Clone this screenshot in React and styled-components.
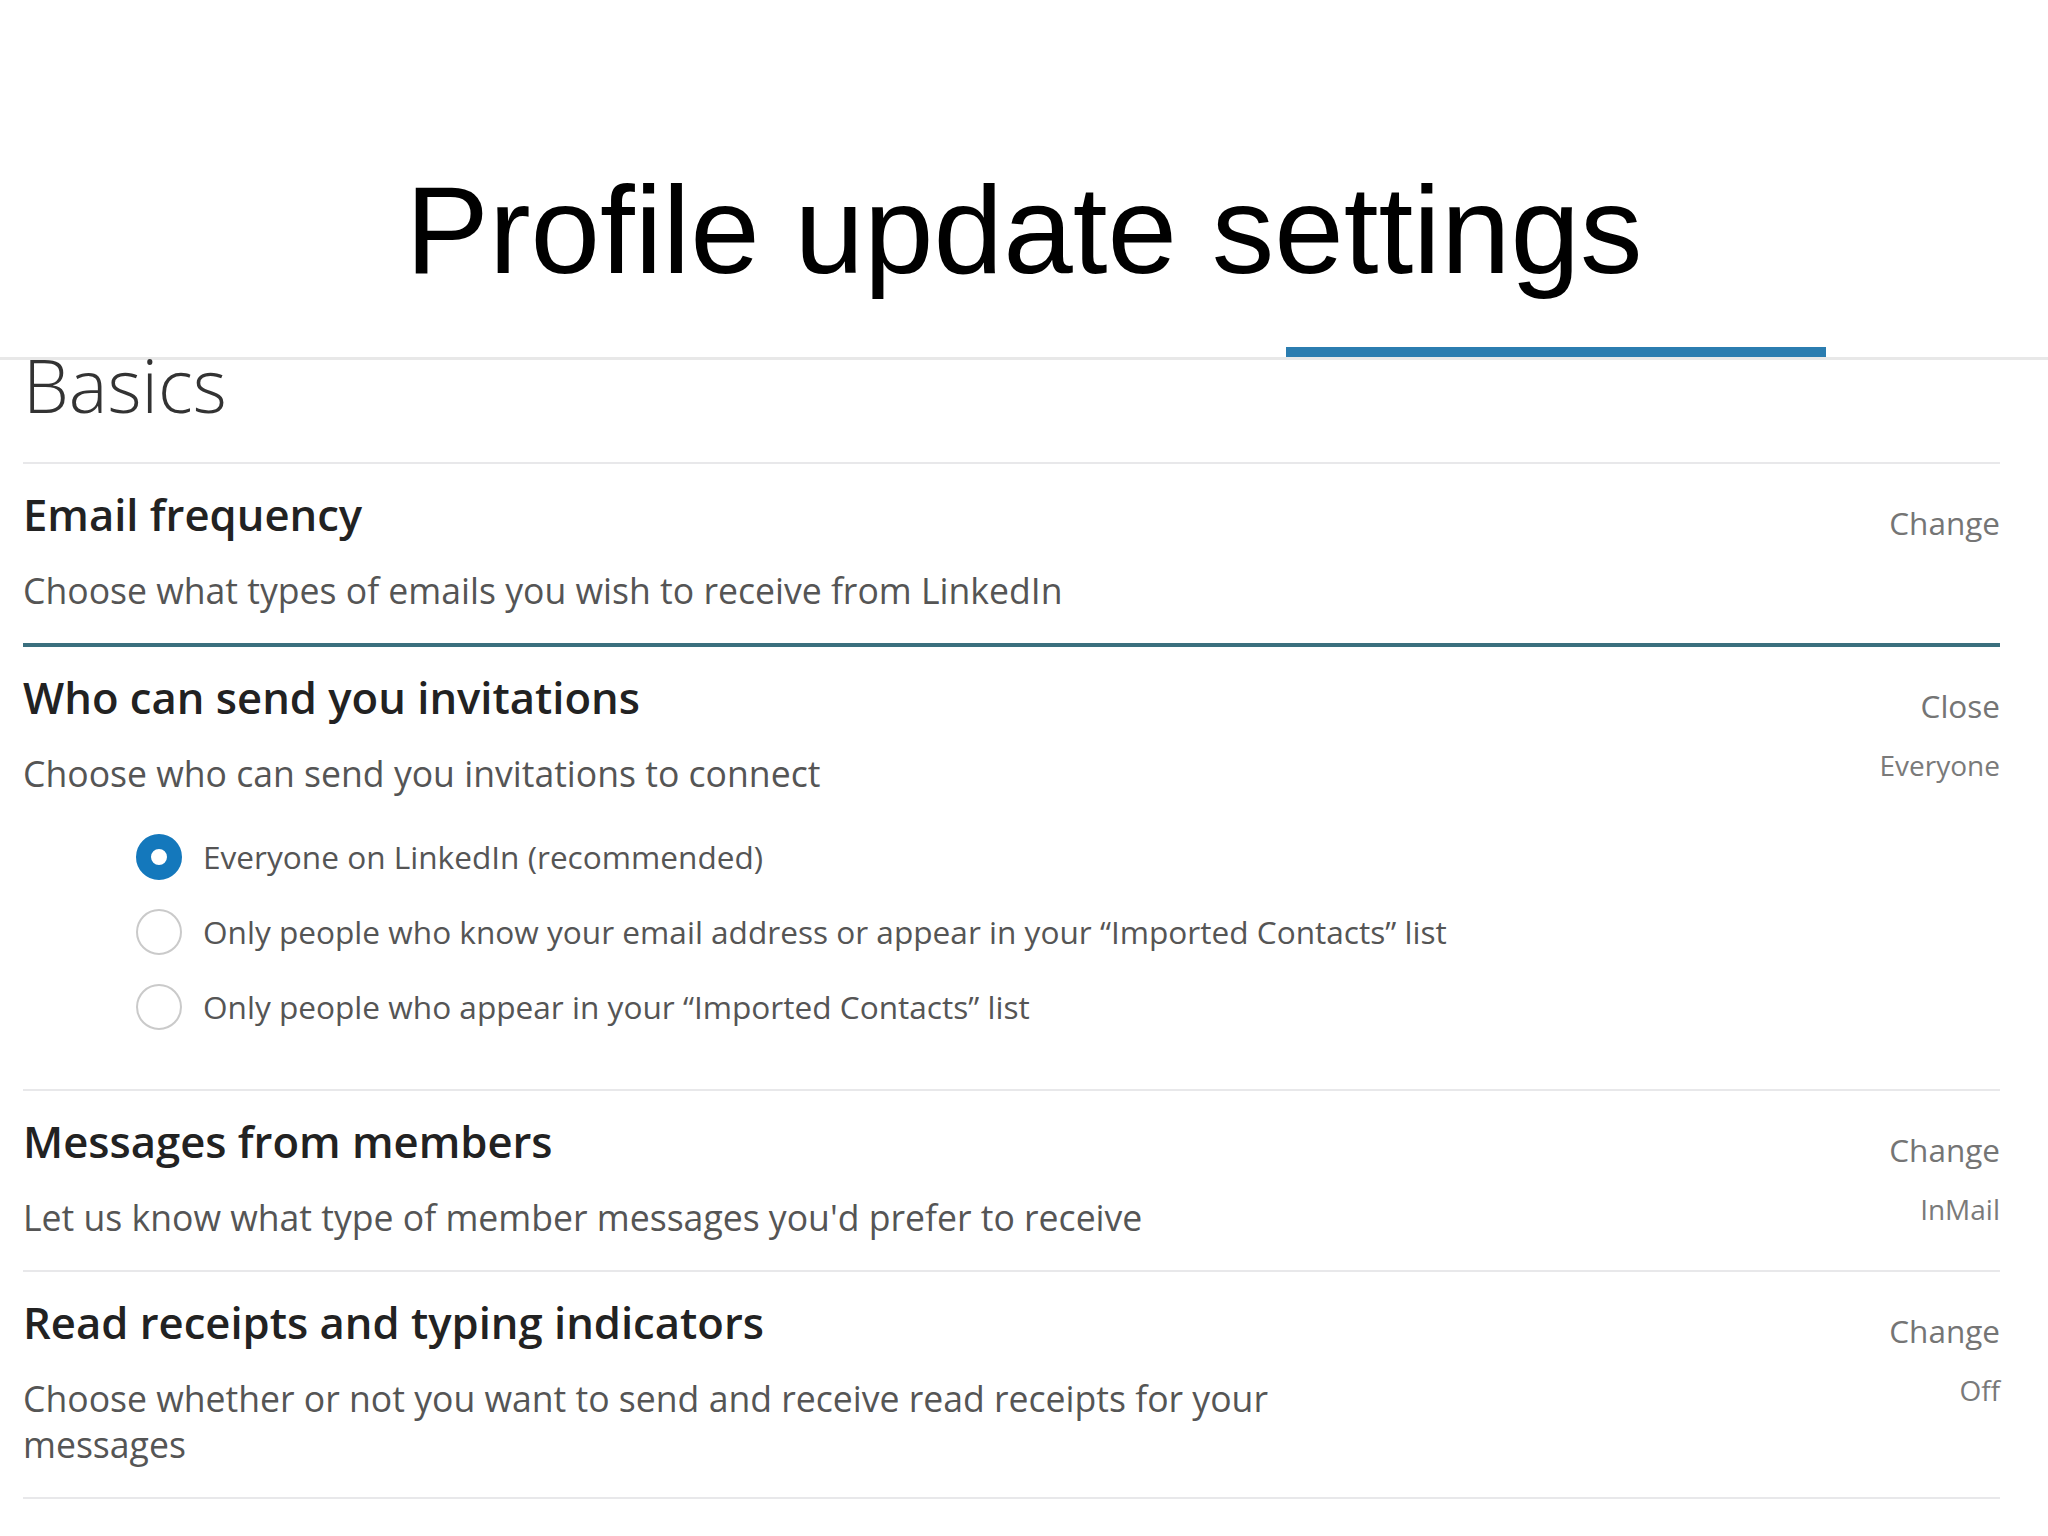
import React from "react";
import styled, { createGlobalStyle } from "styled-components";

const GlobalStyle = createGlobalStyle`
  html, body { margin: 0; padding: 0; background: #ffffff; }
  body { font-family: "Open Sans", "Noto Sans", "DejaVu Sans", sans-serif; }
  * { box-sizing: border-box; }
`;

const Page = styled.div`
  width: 2048px;
  min-height: 1536px;
  background: #ffffff;
`;

const Header = styled.header`
  height: 347px;
  padding-top: 167px;
  text-align: center;
`;

const Title = styled.h1`
  margin: 0;
  font-family: "Liberation Sans", Arial, sans-serif;
  font-weight: 400;
  font-size: 125px;
  line-height: 125px;
  color: #000000;
`;

const TabBar = styled.div`
  display: flex;
  padding-left: 1286px;
  border-bottom: 3px solid #e8e8e8;
`;

const TabIndicator = styled.div`
  width: 540px;
  height: 10px;
  background: #2b7db0;
`;

const Content = styled.main`
  margin: 0 48px 0 23px;
`;

const SectionTitle = styled.h2`
  margin: 0;
  font-weight: 300;
  font-size: 73px;
  line-height: 50px;
  color: #333333;
  padding-bottom: 52px;
  border-bottom: 2px solid #e8e8ea;
`;

const Row = styled.section`
  display: flex;
  justify-content: space-between;
  align-items: flex-start;
  padding: 20px 0 30px;
  border-bottom: ${(p) => (p.$accent ? "4px solid #3a6f7e" : "2px solid #e8e8ea")};
`;

const Main = styled.div`
  flex: 1;
  min-width: 0;
`;

const Heading = styled.h3`
  margin: 0 0 23px;
  font-weight: 600;
  font-size: 43.6px;
  line-height: 60px;
  color: #222222;
`;

const Description = styled.p`
  margin: 0;
  max-width: 1300px;
  font-size: 35.6px;
  line-height: 46px;
  color: #555555;
`;

const Side = styled.div`
  display: flex;
  flex-direction: column;
  align-items: flex-end;
  padding-top: 9px;
  white-space: nowrap;
`;

const Action = styled.span`
  font-size: 31.5px;
  line-height: 60px;
  color: #757575;
`;

const Value = styled.span`
  margin-top: 9px;
  font-size: 28px;
  line-height: 40px;
  color: #7a7a7a;
`;

const RadioGroup = styled.div`
  display: flex;
  flex-direction: column;
  margin: 23px 0 15px 113px;
`;

const RadioRow = styled.label`
  display: flex;
  align-items: center;
  height: 75px;
  gap: 21px;
`;

const Radio = styled.input.attrs({ type: "radio" })`
  appearance: none;
  margin: 0;
  flex: none;
  width: 46px;
  height: 46px;
  border-radius: 50%;
  background: #ffffff;
  border: 2px solid #cacaca;
  &:checked {
    border: 15px solid #1478bc;
  }
`;

const RadioLabel = styled.span`
  font-size: 31.6px;
  line-height: 75px;
  color: #555555;
`;

const options = [
  "Everyone on LinkedIn (recommended)",
  "Only people who know your email address or appear in your \u201cImported Contacts\u201d list",
  "Only people who appear in your \u201cImported Contacts\u201d list",
];

export default function App() {
  return (
    <Page>
      <GlobalStyle />
      <Header>
        <Title>Profile update settings</Title>
      </Header>
      <TabBar>
        <TabIndicator />
      </TabBar>
      <Content>
        <SectionTitle>Basics</SectionTitle>

        <Row $accent>
          <Main>
            <Heading>Email frequency</Heading>
            <Description>Choose what types of emails you wish to receive from LinkedIn</Description>
          </Main>
          <Side>
            <Action>Change</Action>
          </Side>
        </Row>

        <Row>
          <Main>
            <Heading>Who can send you invitations</Heading>
            <Description>Choose who can send you invitations to connect</Description>
            <RadioGroup>
              {options.map((o, i) => (
                <RadioRow key={o}>
                  <Radio name="invites" defaultChecked={i === 0} />
                  <RadioLabel>{o}</RadioLabel>
                </RadioRow>
              ))}
            </RadioGroup>
          </Main>
          <Side>
            <Action>Close</Action>
            <Value>Everyone</Value>
          </Side>
        </Row>

        <Row>
          <Main>
            <Heading>Messages from members</Heading>
            <Description>Let us know what type of member messages you'd prefer to receive</Description>
          </Main>
          <Side>
            <Action>Change</Action>
            <Value>InMail</Value>
          </Side>
        </Row>

        <Row>
          <Main>
            <Heading>Read receipts and typing indicators</Heading>
            <Description>
              Choose whether or not you want to send and receive read receipts for your messages
            </Description>
          </Main>
          <Side>
            <Action>Change</Action>
            <Value>Off</Value>
          </Side>
        </Row>
      </Content>
    </Page>
  );
}
